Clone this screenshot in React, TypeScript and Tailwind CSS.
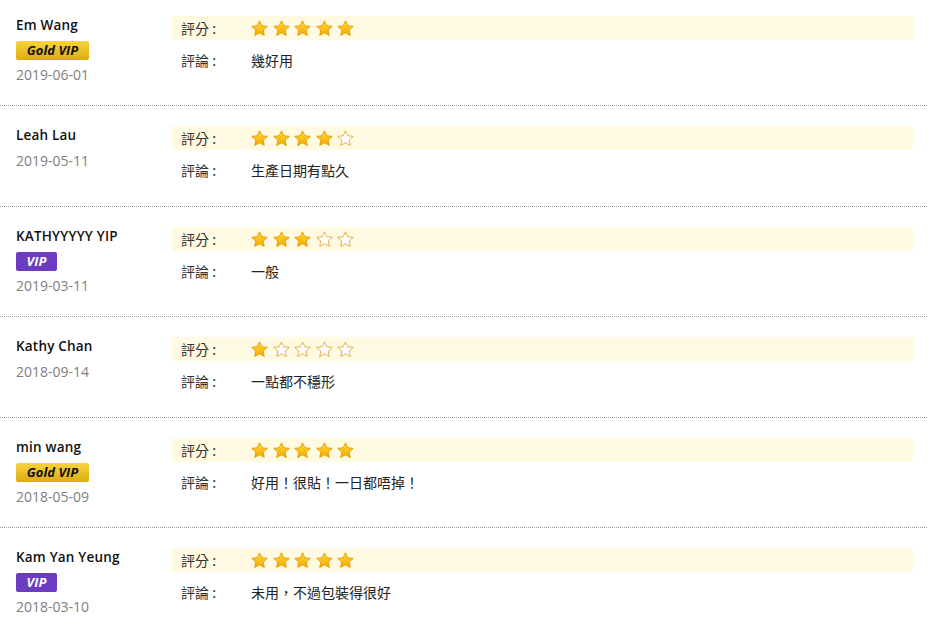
type Review = {
  name: string;
  badge?: "gold" | "vip";
  date: string;
  rating: number;
  comment: string;
};

const reviews: Review[] = [
  { name: "Em Wang", badge: "gold", date: "2019-06-01", rating: 5, comment: "幾好用" },
  { name: "Leah Lau", date: "2019-05-11", rating: 4, comment: "生產日期有點久" },
  { name: "KATHYYYYY YIP", badge: "vip", date: "2019-03-11", rating: 3, comment: "一般" },
  { name: "Kathy Chan", date: "2018-09-14", rating: 1, comment: "一點都不穩形" },
  { name: "min wang", badge: "gold", date: "2018-05-09", rating: 5, comment: "好用！很貼！一日都唔掉！" },
  { name: "Kam Yan Yeung", badge: "vip", date: "2018-03-10", rating: 5, comment: "未用，不過包裝得很好" },
];

const STAR = "M8 0.8l2.2 4.6 5.1.6-3.8 3.5 1 5L8 12l-4.5 2.5 1-5L.7 6l5.1-.6z";

function Star({ filled, id }: { filled: boolean; id: string }) {
  return (
    <svg width="17" height="17" viewBox="0 0 16 16" className="block">
      <defs>
        <linearGradient id={id} x1="0" y1="0" x2="0" y2="1">
          <stop offset="0" stopColor="#ffdc3a" />
          <stop offset="1" stopColor="#f5a900" />
        </linearGradient>
      </defs>
      <path
        d={STAR}
        fill={filled ? `url(#${id})` : "#ffffff"}
        stroke={filled ? "#e39a00" : "#e2a43a"}
        strokeWidth="0.85"
        strokeLinejoin="round"
      />
    </svg>
  );
}

function Badge({ kind }: { kind: "gold" | "vip" }) {
  if (kind === "gold") {
    return (
      <span className="mt-[6px] flex h-[19px] w-[73px] items-center justify-center rounded-[2px] bg-gradient-to-b from-[#f8d43c] to-[#deab0c] text-[13px] font-bold italic text-[#111] leading-none">
        Gold VIP
      </span>
    );
  }
  return (
    <span className="mt-[6px] flex h-[19px] w-[41px] items-center justify-center rounded-[2px] bg-[#6c3bbf] text-[13px] font-bold italic text-white leading-none">
      VIP
    </span>
  );
}

export default function App() {
  return (
    <div
      className="w-[927px] bg-white"
      style={{ fontFamily: '"Open Sans", "Noto Sans CJK TC", sans-serif' }}
    >
      {reviews.map((r, i) => (
        <div
          key={r.name}
          className={`flex border-b border-dotted border-[#9a9a9a] pb-[20px] ${i === 0 ? "pt-[15px]" : "pt-[19px]"}`}
        >
          <div className="flex min-h-[61px] w-[172px] shrink-0 flex-col items-start pl-[16px]">
            <div className="text-[13.5px] font-semibold leading-5 tracking-[0.2px] text-[#111]">{r.name}</div>
            {r.badge && <Badge kind={r.badge} />}
            <div className={`${r.badge ? "mt-[5px]" : "mt-[6px]"} text-[14px] leading-5 text-[#808080]`}>
              {r.date}
            </div>
          </div>
          <div className="w-[741px] text-[14px] text-[#333]" style={{ fontFamily: '"Noto Sans CJK TC", sans-serif' }}>
            <div className="mt-[1px] flex h-6 items-center bg-[#fffae1] pl-[9px]">
              <span className="w-[70px]">評分 :</span>
              <div className="flex gap-[4.5px]">
                {[0, 1, 2, 3, 4].map((s) => (
                  <Star key={s} filled={s < r.rating} id={`g${i}-${s}`} />
                ))}
              </div>
            </div>
            <div className="mt-[10px] flex h-5 items-center pl-[9px]">
              <span className="w-[70px]">評論 :</span>
              <span className="text-[#222]">{r.comment}</span>
            </div>
          </div>
        </div>
      ))}
    </div>
  );
}
